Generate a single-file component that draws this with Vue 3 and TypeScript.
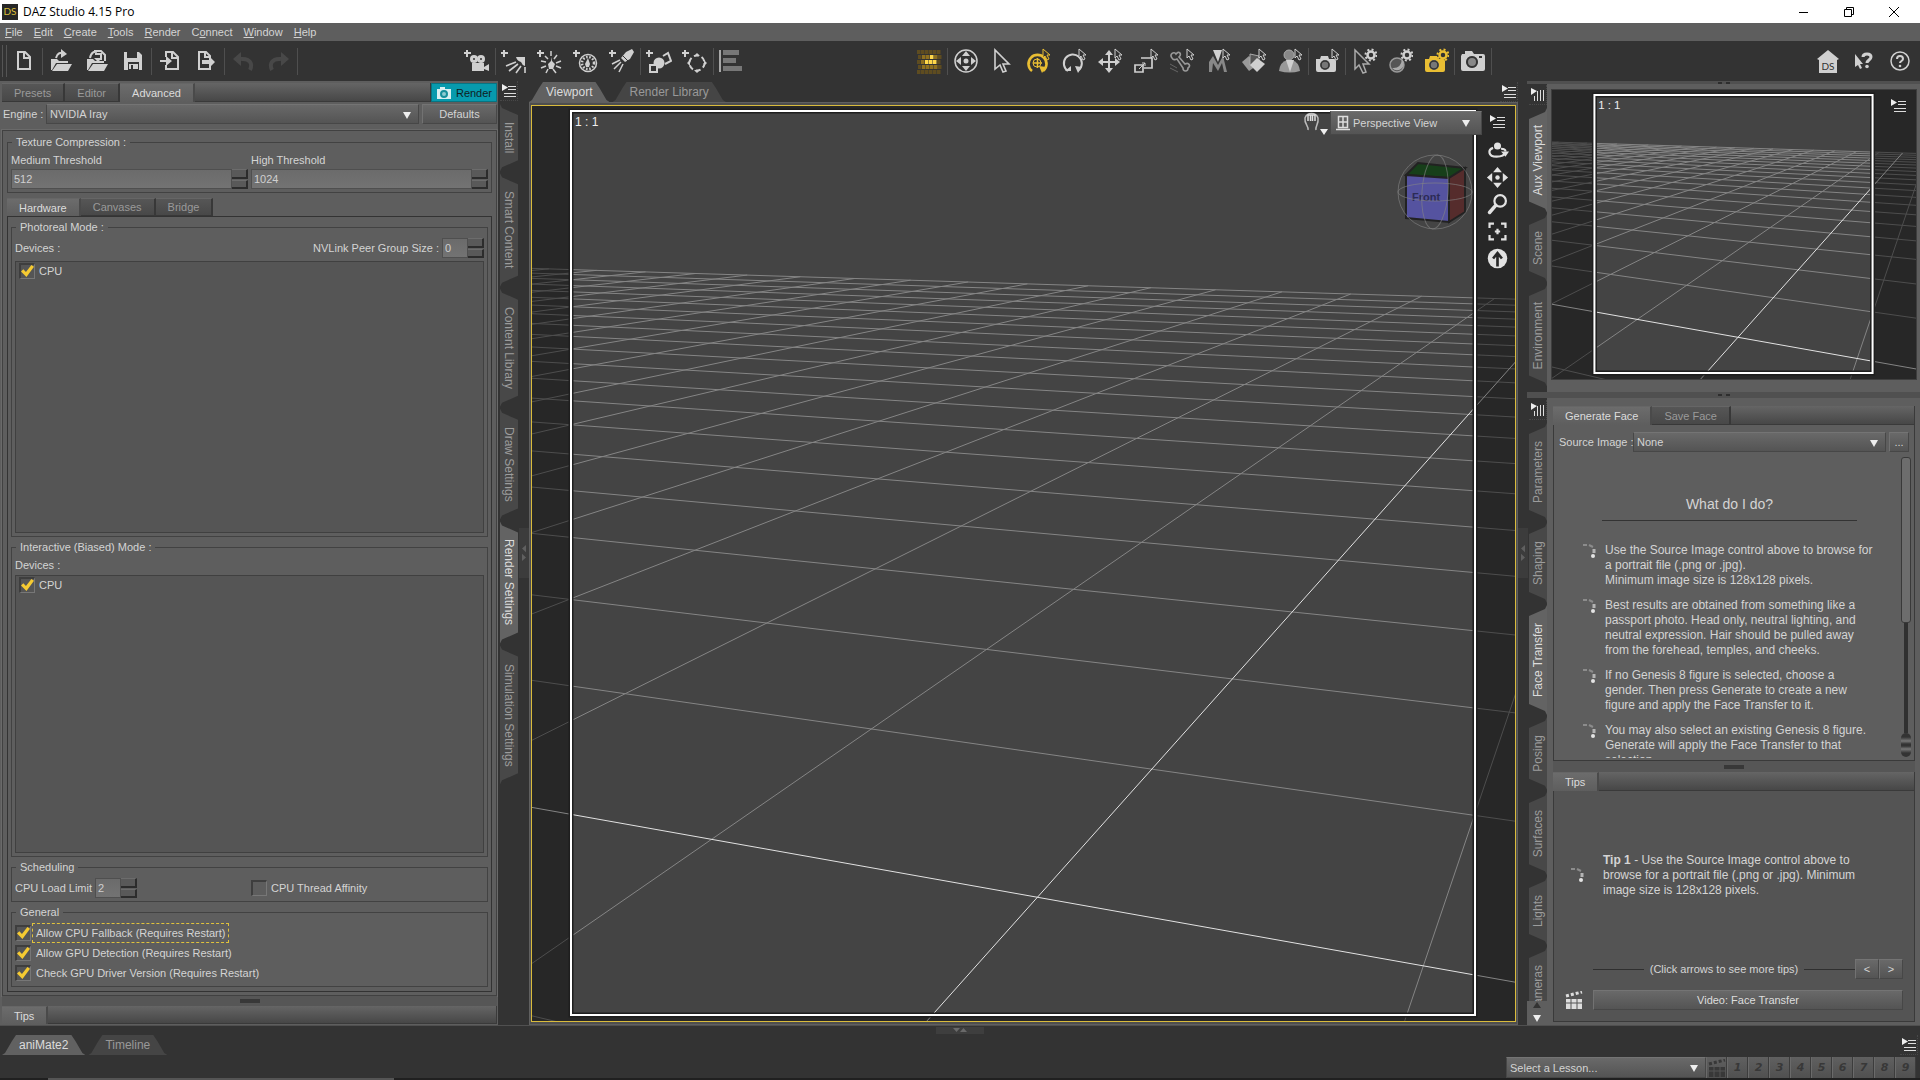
<script setup lang="ts">
import { ref } from 'vue'

interface Tool { label: string; art: string; tone?: string }
type Slot = Tool | null

const plus = '<path d="M0 5h7M3 2v7" stroke="currentColor" stroke-width="2" fill="none"/>'
const pointer = '<path d="M18 1v9l2-2 2 4 2-1-2-4h3z" fill="#333" stroke="currentColor" stroke-width="1"/>'
const cog = '<circle cx="20" cy="7" r="3.500" fill="none" stroke="currentColor" stroke-width="2.500"/><circle cx="20" cy="7" r="5.500" fill="none" stroke="currentColor" stroke-width="2" stroke-dasharray="2 2.300"/>'
const camBody = '<path d="M2 11h4l1-3h7l1 3h5q2 0 2 2v9q0 2-2 2H4q-2 0-2-2z" fill="currentColor"/><circle cx="11" cy="17" r="5" fill="#777"/><circle cx="11" cy="17" r="4" fill="none" stroke="#333" stroke-width="1.5"/>'
const clapper = '<path d="M1 8h16v10H1z" fill="currentColor"/><path d="M1 12h16M6 8v10M12 8v10" stroke="#555" stroke-width="1"/><path d="M1 5l16-4" stroke="currentColor" stroke-width="3" stroke-dasharray="3 2" fill="none"/>'

const fileTools: Slot[] = [
  { label: 'New', art: '<path d="M7 4h7l5 5v12H7z M13 4v6h6" fill="none" stroke="currentColor" stroke-width="2"/>' },
  null,
  { label: 'Open', art: '<path d="M3 11h6l2 2h9v2H8l-4 7H3z M9 16h15l-4 7H4z" fill="currentColor"/><path d="M8 10c1-5 5-6 8-5" fill="none" stroke="currentColor" stroke-width="2"/><path d="M13 1l6 5-6 4z" fill="currentColor"/>' },
  { label: 'Merge', art: '<path d="M3 11h6l2 2h9v2H8l-4 7H3z M9 16h15l-4 7H4z" fill="currentColor"/><path d="M6 10c1-6 5-7 7-6M10 3h7l4 4v6M11 6h6v6" fill="none" stroke="currentColor" stroke-width="2"/><path d="M10 10h8l-4 4z" fill="currentColor"/>' },
  { label: 'Save', art: '<path d="M4 4h15l3 3v15H4z" fill="currentColor"/><path d="M7 4h10v6H7z M8 14h11v8H8z" fill="#333"/><path d="M9 16h9v5H9z" fill="currentColor"/><path d="M11 17h2v4h-2z" fill="#333"/>' },
  null,
  { label: 'Import', art: '<path d="M9 9V4h7l5 5v12H9v-4 M15 4v6h6" fill="none" stroke="currentColor" stroke-width="2"/><path d="M3 12h6V8l6 5-6 5v-4H3z" fill="currentColor"/>' },
  { label: 'Export', art: '<path d="M17 10V8l-4-4H6v17h11v-3 M12 4v5h5" fill="none" stroke="currentColor" stroke-width="2"/><path d="M9 12h7V8l6 6-6 6v-4H9z" fill="currentColor"/>' },
  null,
  { label: 'Undo', tone: 'off', art: '<path d="M20 22c3-6 0-12-9-11" fill="none" stroke="currentColor" stroke-width="4"/><path d="M3 11l8-7v14z" fill="currentColor"/>' },
  { label: 'Redo', tone: 'off', art: '<path d="M6 22c-3-6 0-12 9-11" fill="none" stroke="currentColor" stroke-width="4"/><path d="M23 11l-8-7v14z" fill="currentColor"/>' },
  null,
]

const createTools: Slot[] = [
  { label: 'New Camera', art: plus + '<circle cx="10" cy="11" r="4" fill="currentColor"/><circle cx="17" cy="11" r="4" fill="currentColor"/><path d="M8 15h12v8H8z M20 19l5-3v7l-5-2z" fill="currentColor"/><circle cx="10" cy="11" r="1" fill="#333"/><circle cx="17" cy="11" r="1" fill="#333"/>' },
  null,
  { label: 'New Distant Light', art: plus + '<path d="M15 9h9v9q-3-1-4-4-4-1-5-5z" fill="currentColor"/><path d="M15 14L5 18M17 16L8 23M20 18l-5 7M24 19v6" stroke="currentColor" stroke-width="1.6" fill="none"/>' },
  { label: 'New Point Light', art: plus + '<path d="M14 9l1 4 3 3-2 5h-4l-1-5 3-3z" fill="currentColor"/><path d="M14 3v5M20 7l-3 4M24 13l-5 2M24 20l-5-2M19 25l-3-4M9 25l2-4M4 20l5-2M4 13l5 1M8 8l3 3" stroke="currentColor" stroke-width="1.5" fill="none"/>' },
  { label: 'New Linear Point Light', art: plus + '<circle cx="15" cy="15" r="8.5" fill="none" stroke="currentColor" stroke-width="1.5"/><circle cx="15" cy="15" r="6" fill="none" stroke="currentColor" stroke-width="2.5" stroke-dasharray="1.6 1.6"/><path d="M15 10l2 6-1 3h-3l-1-3z" fill="currentColor"/>' },
  { label: 'New Spotlight', art: plus + '<path d="M17 4l6-3 2 3-4 7-5 3-4-4z" fill="currentColor"/><path d="M14 8l5 5" stroke="#333"/><path d="M11 12L3 16M12 14l-7 7M14 16l-4 8" stroke="currentColor" stroke-width="1.5"/>' },
  null,
  { label: 'New Primitive', art: plus + '<circle cx="13" cy="15" r="5.5" fill="currentColor"/><path d="M17 8l5-3 3 8-6 3" fill="none" stroke="currentColor" stroke-width="2"/><path d="M4 17h7v7H4z" fill="#333" stroke="currentColor" stroke-width="2"/>' },
  { label: 'New Null', art: plus + '<circle cx="15" cy="15" r="7.5" fill="none" stroke="currentColor" stroke-width="2" stroke-dasharray="5 3"/><path d="M12 8l3-3 3 3zM12 22l3 3 3-3zM8 12l-3 3 3 3zM22 12l3 3-3 3z" fill="currentColor"/>' },
  null,
  { label: 'Align', art: '<path d="M1 2v22" stroke="currentColor" stroke-width="1.5"/><path d="M4 2h16v5H4z M4 10h13v5H4z M4 18h19v5H4z" fill="#777"/>' },
]

const bricks = Array.from({ length: 30 }, (_, i) => {
  const row = Math.floor(i / 6)
  const col = i % 6
  const hot = (row === 1 && col === 3) || (row === 2 && col > 1 && col < 5)
  return `<rect x="${1 + col * 4 + (row % 2)}" y="${2 + row * 5}" width="3.500" height="4" fill="${hot ? '#ffd84a' : col > 0 && col < 5 && row > 0 && row < 4 ? '#8f701f' : '#5e4c20'}"/>`
}).join('')

const sceneTools: Slot[] = [
  { label: 'Iray Preview', art: bricks },
  null,
  { label: 'Universal Manipulator', art: '<circle cx="13" cy="13" r="11" fill="none" stroke="currentColor" stroke-width="1.5"/><circle cx="13" cy="13" r="2.5" fill="currentColor"/><path d="M9 8l4-5 4 5zM9 18l4 5 4-5zM8 9l-5 4 5 4zM18 9l5 4-5 4z" fill="currentColor"/>' },
  { label: 'Node Selection', art: '<path d="M6 2v19l5-4 3 7 3-1-3-7h6z" fill="none" stroke="currentColor" stroke-width="1.6"/>' },
  { label: 'Active Pose', tone: 'gold', art: '<path d="M7 23a9 9 0 1 1 11 0" fill="none" stroke="currentColor" stroke-width="2.6"/><path d="M14 18l7 1-4 6z" fill="currentColor"/><path d="M8 15h9M12.500 10v10" stroke="currentColor" stroke-width="1.5"/><circle cx="12" cy="15" r="4" fill="none" stroke="currentColor"/>' + pointer },
  { label: 'Rotate', art: '<path d="M7 23a9 9 0 1 1 11-1" fill="none" stroke="currentColor" stroke-width="2"/><path d="M14 18l7 1-4 6z M4 23h6v-5z" fill="currentColor"/>' + pointer },
  { label: 'Translate', art: '<path d="M12 6v16M4 14h16" stroke="currentColor" stroke-width="2"/><path d="M8 7l4-5 4 5zM8 20l4 5 4-5zM6 10l-5 4 5 4zM18 10l5 4-5 4z" fill="currentColor"/>' + pointer },
  { label: 'Scale', art: '<path d="M2 17h8v7H2z M8 10h11v10h-8" fill="none" stroke="currentColor" stroke-width="1.7"/><path d="M6 21l6-6M12 18v-3h-3" stroke="currentColor" fill="none"/>' + pointer },
  { label: 'Joint Editor', art: '<path d="M3 10c-3-4 2-7 4-4 3-4 6 0 3 3l6 7c4-2 6 2 3 4 0 4-5 4-5 0l-6-9c-2 1-4 1-5-1z" fill="none" stroke="#999" stroke-width="1.6"/><path d="M1 16l7 4M1 20l8 4" stroke="#666"/>' + pointer },
  { label: 'Node Weight Brush', art: '<path d="M4 24V14l4-6 5 9 5-9 4 16h-3l-2-9-4 8-5-8-1 9z" fill="#888"/><path d="M8 2h9l-4 12z" fill="currentColor"/>' + pointer },
  { label: 'Surface Selection', art: '<path d="M1 14l7-6 7 10-7 5z" fill="#999"/><path d="M9 6l9 2v12l-9-3z" fill="#555" stroke="#aaa"/><path d="M16 10l8 6-8 8-7-7z" fill="currentColor"/>' + pointer },
  { label: 'Figure Setup', art: '<circle cx="12" cy="7" r="5" fill="#888" stroke="#aaa"/><path d="M2 23q1-9 8-11h5q7 2 8 11-10 3-21 0z" fill="#999"/><path d="M9 12l4 12 4-12z" fill="currentColor"/>' + pointer },
  null,
  { label: 'Spot Render', art: camBody + pointer },
  null,
  { label: 'Tool Settings', art: '<path d="M4 2v19l4-4 4 8 3-1-3-8h6z" fill="none" stroke="#aaa" stroke-width="1.5"/>' + cog },
  { label: 'Draw Settings', art: '<circle cx="10" cy="17" r="7" fill="#555" stroke="#999" stroke-width="1.500"/><path d="M5 20q9 1 10-9 4 6-1 10-5 3-9-1z" fill="#aaa"/>' + cog },
  { label: 'Render Settings', tone: 'gold', art: camBody + cog },
  null,
  { label: 'Render', art: '<path d="M2 6h3V3h7l2 3h9q2 0 2 2v13q0 2-2 2H3q-2 0-2-2V8z" fill="currentColor"/><circle cx="12" cy="14" r="6" fill="#888"/><circle cx="12" cy="14" r="5" fill="none" stroke="#333" stroke-width="2"/><path d="M19 8h3v2h-3z" fill="#333"/>' },
  null,
]

const helpTools: Slot[] = [
  { label: 'Home', art: '<path d="M13 2l11 9-2 1v13H4V12l-2-1z" fill="currentColor"/><text x="13" y="22" text-anchor="middle" font-family="Lato, sans-serif" font-size="10" fill="#333">DS</text>' },
  { label: "What's This?", art: '<path d="M4 6v13l3-2 2 4 2-1-2-4h3z" fill="currentColor"/><path d="M12 9c0-4 8-4 8 0 0 3-4 3-4 6" fill="none" stroke="currentColor" stroke-width="3"/><circle cx="16" cy="18.500" r="1.800" fill="currentColor"/>' },
  { label: 'Help', art: '<circle cx="13" cy="13" r="9" fill="none" stroke="currentColor" stroke-width="1.500"/><path d="M10 11c0-4 6-4 6 0 0 2-3 2-3 4" fill="none" stroke="currentColor" stroke-width="2"/><circle cx="13" cy="18" r="1.300" fill="currentColor"/>' },
]

const toolGroups = [
  { id: 'file', items: fileTools },
  { id: 'create', items: createTools },
  { id: 'scene', items: sceneTools },
  { id: 'help', items: helpTools },
]

const cameraTools: Tool[] = [
  { label: 'Orbit', art: '<path d="M8 10C2 12 2 20 12 20c6 0 9-2 10-5M17 11c3 0 5 1 5 3" fill="none" stroke="currentColor" stroke-width="2.500"/><circle cx="13" cy="8" r="4" fill="currentColor"/><path d="M17 14h9l-4 6z" fill="currentColor"/>' },
  { label: 'Pan', art: '<circle cx="13" cy="13" r="2.5" fill="currentColor"/><path d="M8 7l5-6 5 6zM8 19l5 6 5-6zM7 8l-6 5 6 5zM19 8l6 5-6 5z" fill="currentColor"/>' },
  { label: 'Zoom', art: '<circle cx="16" cy="9" r="6.5" fill="none" stroke="currentColor" stroke-width="2.500"/><path d="M11 14l-7 8" stroke="currentColor" stroke-width="4" stroke-linecap="round"/>' },
  { label: 'Frame', art: '<path d="M4 9V4h5M17 4h5v5M22 17v5h-5M9 22H4v-5M13 10v6M10 13h6" fill="none" stroke="currentColor" stroke-width="2.500"/>' },
  { label: 'Reset', art: '<circle cx="13" cy="13" r="11" fill="currentColor"/><path d="M13 22V8M8 13l5-6 5 6" fill="none" stroke="#282828" stroke-width="3"/>' },
]

const menus = [
  ['', 'F', 'ile'], ['', 'E', 'dit'], ['', 'C', 'reate'], ['', 'T', 'ools'],
  ['', 'R', 'ender'], ['C', 'o', 'nnect'], ['', 'W', 'indow'], ['', 'H', 'elp'],
]
const leftTabs = ['Install', 'Smart Content', 'Content Library', 'Draw Settings', 'Render Settings', 'Simulation Settings']
const auxTabs = ['Aux Viewport', 'Scene', 'Environment']
const rightTabs = ['Parameters', 'Shaping', 'Face Transfer', 'Posing', 'Surfaces', 'Lights', 'Cameras']

const general = ref([
  { label: 'Allow CPU Fallback (Requires Restart)', on: true, focus: true },
  { label: 'Allow GPU Detection (Requires Restart)', on: true, focus: false },
  { label: 'Check GPU Driver Version (Requires Restart)', on: true, focus: false },
])
const photorealCpu = ref(true)
const interactiveCpu = ref(true)
const affinity = ref(false)

const steps = [
  'Use the Source Image control above to browse for\na portrait file (.png or .jpg).\nMinimum image size is 128x128 pixels.',
  'Best results are obtained from something like a\npassport photo. Head only, neutral lighting, and\nneutral expression. Hair should be pulled away\nfrom the forehead, temples, and cheeks.',
  'If no Genesis 8 figure is selected, choose a\ngender. Then press Generate to create a new\nfigure and apply the Face Transfer to it.',
  'You may also select an existing Genesis 8 figure.\nGenerate will apply the Face Transfer to that\nselection.',
]

// Perspective projection of the ground plane into the 904-unit render frame.
function project(u: number, v: number): string {
  const w = 1 - 0.0844 * u + 0.2098 * v
  const x = (313.2 * u + 235.9 * v + 466.4) / w
  const y = (-3.62 * u + 10.2 * v + 785.5) / w
  return `${x.toFixed(1)} ${y.toFixed(1)}`
}
const along = (u: number) => `M${project(u, -2)}L${project(u, 20)}`
const across = (v: number) => `M${project(-20, v)}L${project(3, v)}`
let gridPath = ''
for (let u = -20; u <= 3; u++) if (u !== 0) gridPath += along(u)
for (let v = -2; v <= 20; v++) if (v !== 0) gridPath += across(v)
const axisPath = along(0) + across(0)
const maskPath = 'M-3000-3000H4000V4000H-3000zM0 0V904H904V0z'
</script>

<template>
  <div class="app">
    <header class="titlebar">
      <span class="logo">DS</span>
      <h1>DAZ Studio 4.15 Pro</h1>
      <button aria-label="Minimize"><svg width="12" height="12"><path d="M1 6.500h9" stroke="#000" /></svg></button>
      <button aria-label="Restore"><svg width="12" height="12"><path d="M1.500 3.500h7v7h-7z M3.500 3V1.500h7v7H9" fill="none" stroke="#000" /></svg></button>
      <button aria-label="Close"><svg width="12" height="12"><path d="M1 1l10 10M11 1L1 11" stroke="#000" /></svg></button>
    </header>

    <nav class="menubar">
      <button v-for="m in menus" :key="m.join('')">{{ m[0] }}<u>{{ m[1] }}</u>{{ m[2] }}</button>
    </nav>

    <div class="toolbar">
      <div v-for="g in toolGroups" :key="g.id" class="tools" :class="g.id">
        <template v-for="(t, i) in g.items" :key="i">
          <button v-if="t" :aria-label="t.label" :class="t.tone"><svg viewBox="0 0 26 26" v-html="t.art"></svg></button>
          <i v-else class="sep"></i>
        </template>
      </div>
    </div>

    <main class="work">
      <section class="dock left">
        <div class="panel settings">
          <div class="tabs">
            <button>Presets</button><button>Editor</button><button class="on">Advanced</button>
            <span class="fill"></span>
            <button class="render">
              <svg width="16" height="14" viewBox="0 0 16 14"><path d="M1 3h3V1h5v2h6v10H1z" fill="#d8f0f2" /><circle cx="8" cy="8" r="3" fill="#8fcbd1" stroke="#178f9b" stroke-width="2" /></svg>Render
            </button>
          </div>
          <div class="engine">
            <label for="engine">Engine :</label>
            <span class="combo"><select id="engine"><option>NVIDIA Iray</option></select></span>
            <button class="btn">Defaults</button>
          </div>
          <div class="outer">
            <fieldset>
              <legend>Texture Compression :</legend>
              <div class="pair">
                <div><label for="med">Medium Threshold</label><span class="spin"><input id="med" value="512" /><span><button aria-label="Increase"></button><button aria-label="Decrease"></button></span></span></div>
                <div><label for="high">High Threshold</label><span class="spin"><input id="high" value="1024" /><span><button aria-label="Increase"></button><button aria-label="Decrease"></button></span></span></div>
              </div>
            </fieldset>
            <div class="tabs sub">
              <button class="on">Hardware</button><button>Canvases</button><button>Bridge</button>
            </div>
            <div class="page">
              <fieldset class="grow">
                <legend>Photoreal Mode :</legend>
                <div class="row tall">
                  <span>Devices :</span>
                  <label class="push" for="nv">NVLink Peer Group Size :</label>
                  <span class="spin small"><input id="nv" value="0" /><span><button aria-label="Increase"></button><button aria-label="Decrease"></button></span></span>
                </div>
                <div class="list"><label class="check"><input v-model="photorealCpu" type="checkbox" />CPU</label></div>
              </fieldset>
              <fieldset class="grow">
                <legend>Interactive (Biased) Mode :</legend>
                <div class="row"><span>Devices :</span></div>
                <div class="list"><label class="check"><input v-model="interactiveCpu" type="checkbox" />CPU</label></div>
              </fieldset>
              <fieldset>
                <legend>Scheduling</legend>
                <div class="pair tall">
                  <div class="row">
                    <label for="load">CPU Load Limit</label>
                    <span class="spin small"><input id="load" value="2" /><span><button aria-label="Increase"></button><button aria-label="Decrease"></button></span></span>
                  </div>
                  <label class="check"><input v-model="affinity" type="checkbox" />CPU Thread Affinity</label>
                </div>
              </fieldset>
              <fieldset>
                <legend>General</legend>
                <div>
                  <label v-for="g in general" :key="g.label" class="check opt"><input v-model="g.on" type="checkbox" /><span :class="{ focus: g.focus }">{{ g.label }}</span></label>
                </div>
              </fieldset>
            </div>
          </div>
          <div class="grip"><i></i></div>
          <div class="tabs tipbar"><button class="on">Tips</button><span class="fill"></span></div>
        </div>
        <div class="strip">
          <button class="menu" aria-label="Pane options"><svg width="14" height="14"><path d="M0 0l6 3.500L0 7z" fill="#eee" /><path d="M6 2.500h8M6 5.500h8M2 9.500h12M2 12.500h12" stroke="#ddd" /></svg></button>
          <button v-for="t in leftTabs" :key="t" class="side" :class="{ on: t === 'Render Settings' }">{{ t }}</button>
        </div>
      </section>

      <div class="gutter"><i></i></div>

      <section class="center">
        <div class="vtabs">
          <button class="trap on">Viewport</button><button class="trap">Render Library</button>
          <button class="menu push" aria-label="Pane options"><svg width="14" height="14"><path d="M0 0l6 3.500L0 7z" fill="#eee" /><path d="M6 2.500h8M6 5.500h8M2 9.500h12M2 12.500h12" stroke="#ddd" /></svg></button>
        </div>
        <div class="frame">
          <div class="view">
            <svg class="scene" viewBox="0 0 904 904">
              <path :d="gridPath" class="grid" />
              <path :d="axisPath" class="axis" />
              <path :d="maskPath" class="mask" />
              <rect x="1" y="1" width="902" height="902" class="shadow" />
              <rect x="1" y="1" width="902" height="902" class="border" />
              <text x="5" y="16" class="ratio">1 : 1</text>
            </svg>
            <svg class="cube" width="78" height="80" viewBox="0 0 78 80">
              <path d="M10 23l12-12 47 5-16 10z" fill="#173f1a" stroke="#222" stroke-width="2" />
              <path d="M53 26l16-10v44L53 70z" fill="#552c2c" stroke="#222" stroke-width="2" />
              <path d="M10 23l43 3v44l-43-4z" fill="#5553a0" stroke="#222" stroke-width="2" />
              <text x="30" y="49" text-anchor="middle" font-family="Liberation Sans, sans-serif" font-size="11" font-weight="bold" fill="#2c2b55">Front</text>
              <g fill="none" stroke="#858585" stroke-opacity="0.600"><circle cx="39" cy="40" r="37" /><ellipse cx="39" cy="40" rx="37" ry="9" /><ellipse cx="39" cy="40" rx="13" ry="37" transform="rotate(4 39 40)" /></g>
            </svg>
            <div class="viewbar">
              <svg class="hand" width="26" height="26"><path d="M5 19c1-4-4-6-3-12 2-6 11-6 13 0 1 6-3 8-2 12" fill="none" stroke="#bbb" stroke-width="1.500" /><path d="M5 10V4h7v6M7.500 4v6M9.500 4v6" fill="none" stroke="#ddd" stroke-width="1.500" /><path d="M17 18h8l-4 6z" fill="#eee" /></svg>
              <span class="combo cam">
                <svg width="14" height="16"><path d="M2.500 1.500h9v11h-9z M7 1v12M2 7h10M0 14.500h14" fill="none" stroke="#ddd" stroke-width="1.500" /></svg>
                <select aria-label="Camera"><option>Perspective View</option></select>
              </span>
              <button class="vmenu" aria-label="Viewport options"><svg width="16" height="14"><path d="M0 0l6 3.500L0 7z" fill="#eee" /><path d="M7 2.500h8M7 5.500h8M3 9.500h12M3 12.500h12" stroke="#ddd" /></svg></button>
            </div>
            <div class="camtools">
              <button v-for="c in cameraTools" :key="c.label" :aria-label="c.label"><svg viewBox="0 0 26 26" v-html="c.art"></svg></button>
            </div>
          </div>
        </div>
      </section>

      <div class="gutter"><i></i></div>

      <section class="dock right">
        <div class="ridge"><i></i></div>
        <div class="block aux">
          <div class="strip">
            <button class="menu" aria-label="Pane options"><svg width="14" height="14"><path d="M0 0l6 3L0 7z" fill="#eee" /><path d="M6.500 3v10M9.500 2v11M12.500 2v11M3.500 8v5" stroke="#ddd" /></svg></button>
            <button v-for="t in auxTabs" :key="t" class="side" :class="{ on: t === 'Aux Viewport' }">{{ t }}</button>
          </div>
          <div class="panel">
            <div class="view">
              <svg class="scene" viewBox="0 0 904 904">
                <path :d="gridPath" class="grid" />
                <path :d="axisPath" class="axis" />
                <path :d="maskPath" class="mask" />
                <rect x="3" y="3" width="898" height="898" class="shadow" />
                <rect x="3" y="3" width="898" height="898" class="border" />
                <text x="15" y="50" class="ratio aux-ratio">1 : 1</text>
              </svg>
              <button class="vmenu" aria-label="Viewport options"><svg width="16" height="14"><path d="M0 0l6 3.500L0 7z" fill="#eee" /><path d="M7 2.500h8M7 5.500h8M3 9.500h12M3 12.500h12" stroke="#ddd" /></svg></button>
            </div>
          </div>
        </div>
        <div class="ridge mid"><i></i></div>
        <div class="block lower">
          <div class="strip">
            <button class="menu" aria-label="Pane options"><svg width="14" height="14"><path d="M0 0l6 3L0 7z" fill="#eee" /><path d="M6.500 3v10M9.500 2v11M12.500 2v11M3.500 8v5" stroke="#ddd" /></svg></button>
            <button v-for="t in rightTabs" :key="t" class="side" :class="{ on: t === 'Face Transfer' }">{{ t }}</button>
            <div class="scroller"><svg width="10" height="22"><path d="M1 7l4-6 4 6z" fill="#333" /><path d="M1 14h8l-4 7z" fill="#eee" /></svg></div>
          </div>
          <div class="panel">
            <div class="face">
              <div class="tabs"><button class="on">Generate Face</button><button>Save Face</button><span class="fill"></span></div>
              <div class="body">
                <div class="source">
                  <label for="src">Source Image :</label>
                  <span class="combo"><select id="src"><option>None</option></select></span>
                  <button class="btn">...</button>
                </div>
                <div class="scroll">
                  <div class="guide">
                    <h2>What do I do?</h2>
                    <ul>
                      <li v-for="s in steps" :key="s">
                        <svg width="14" height="16"><path d="M1 2h4M7 2l4 2" stroke="#8c8c8c" stroke-width="2" /><path d="M12 6v4" stroke="#b4b4b4" stroke-width="3" /><circle cx="11" cy="13" r="2" fill="#e4e4e4" /></svg>
                        <p>{{ s }}</p>
                      </li>
                    </ul>
                  </div>
                  <div class="bar"><i></i><b></b></div>
                </div>
              </div>
            </div>
            <div class="grip"><i></i></div>
            <div class="tips">
              <div class="tabs"><button class="on">Tips</button><span class="fill"></span></div>
              <div class="body">
                <div class="tip">
                  <svg width="14" height="16"><path d="M1 2h4M7 2l4 2" stroke="#8c8c8c" stroke-width="2" /><path d="M12 6v4" stroke="#b4b4b4" stroke-width="3" /><circle cx="11" cy="13" r="2" fill="#e4e4e4" /></svg>
                  <p><strong>Tip 1</strong> - Use the Source Image control above to<br />browse for a portrait file (.png or .jpg). Minimum<br />image size is 128x128 pixels.</p>
                </div>
                <div class="pager"><hr /><span>(Click arrows to see more tips)</span><hr /><button class="btn">&lt;</button><button class="btn">&gt;</button></div>
                <div class="video"><svg width="18" height="18" v-html="clapper"></svg><button class="btn">Video: Face Transfer</button></div>
              </div>
            </div>
          </div>
        </div>
      </section>
    </main>

    <footer class="bottom">
      <span class="nub"></span>
      <div class="vtabs">
        <button class="trap on">aniMate2</button><button class="trap">Timeline</button>
        <button class="menu push" aria-label="Pane options"><svg width="14" height="14"><path d="M0 0l6 3.500L0 7z" fill="#eee" /><path d="M6 2.500h8M6 5.500h8M2 9.500h12M2 12.500h12" stroke="#ddd" /></svg></button>
      </div>
      <div class="lessons">
        <span class="combo"><select aria-label="Lesson"><option>Select a Lesson...</option></select></span>
        <button class="num" aria-label="Play lesson"><svg width="18" height="18" v-html="clapper"></svg></button>
        <button v-for="n in 9" :key="n" class="num">{{ n }}</button>
      </div>
      <div class="edge"><i></i></div>
    </footer>
  </div>
</template>

<style>
body { margin: 0; background: #333; overflow: hidden; }
</style>

<style scoped>
.app { height: 100vh; display: flex; flex-direction: column; overflow: hidden; background: #333; color: #d4d4d4; font: 11px/14px "Liberation Sans", Arial, sans-serif; }
.app * { box-sizing: border-box; }
button, input, select { font: inherit; color: inherit; border: 0; padding: 0; margin: 0; background: none; border-radius: 0; outline: 0; }
button, label { white-space: nowrap; }
svg { display: block; flex: none; }
p, h1, h2, ul { margin: 0; padding: 0; font-weight: normal; }
.push { margin-left: auto; }

.titlebar { flex: none; height: 23px; display: flex; align-items: center; background: #fff; color: #000; padding: 0 4px 0 2px; }
.logo { width: 16px; height: 16px; background: #262626; color: #d8bd3a; font: 10px/15px Lato, sans-serif; text-align: center; }
.titlebar h1 { font: 12px/16px "Open Sans", "Noto Sans", sans-serif; margin: 0 auto 0 5px; }
.titlebar button { width: 45px; height: 23px; display: flex; align-items: center; justify-content: center; }
.menubar { flex: none; height: 18px; background: #5e5e5e; display: flex; gap: 11px; padding: 0 5px; }
.toolbar { flex: none; height: 40px; padding: 0 2px 0 6px; display: flex; align-items: center; position: relative; }
.toolbar::before { content: ""; width: 3px; height: 32px; border: solid #555; border-width: 0 1px; position: absolute; left: 2px; }
.tools { display: flex; align-items: center; color: #d0d0d0; }
.tools button { width: 36px; height: 36px; display: flex; align-items: center; justify-content: center; }
.tools button svg { width: 26px; height: 26px; }
.tools .off { color: #484848; }
.tools .gold { color: #e9be33; }
.sep { width: 1px; height: 27px; background: #4f4f4f; }
.file { flex: 1 1 453px; }
.create { flex: 1 1 452px; }
.scene { flex: 1 1 899px; }
.help { flex: none; }

.work { flex: 1; min-height: 0; display: flex; }
.dock { display: flex; }
.left { flex: 0 0 519px; min-height: 0; }
.right { flex: 0 0 393px; flex-direction: column; min-height: 0; }
.panel { flex: 1; min-width: 0; background: #5e5e5e; display: flex; flex-direction: column; }
.settings { padding: 2px 1px 1px 2px; }
.strip { flex: none; width: 21px; display: flex; flex-direction: column; align-items: flex-start; padding-left: 2px; overflow: hidden; }
.menu { flex: none; width: 18px; height: 20px; border: 1px dotted #484848; border-width: 0 1px 1px 0; display: flex; align-items: center; justify-content: center; margin-bottom: 2px; }
.side { flex: none; width: 18px; writing-mode: vertical-rl; font-size: 12px; line-height: 18px; padding: 19px 0; color: #9c9c9c; background: #484848; clip-path: polygon(0 1px, 2px 5px, 100% 12px, 100% calc(100% - 12px), 2px calc(100% - 5px), 0 calc(100% - 1px)); }
.side.on { background: #636363; color: #dcdcdc; }
.right .strip { width: 20px; position: relative; }
.right .side { transform: rotate(180deg); }
.aux .side { padding: 18px 0; }

.tabs { flex: none; display: flex; height: 19px; }
.tabs > button { padding: 0 12px; color: #9a9a9a; background: linear-gradient(#565656, #484848); border-right: 2px solid #383838; border-bottom: 1px solid #383838; border-top: 1px solid #666; }
.tabs > button.on { color: #dcdcdc; background: linear-gradient(#6c6c6c, #5e5e5e); border-bottom: 0; border-right-color: #4a4a4a; }
.tabs .fill { flex: 1; background: linear-gradient(#656565, #474747); border-bottom: 1px solid #3a3a3a; border-right: 1px solid #3a3a3a; }
.tabs > button.render { width: 66px; padding: 0; display: flex; align-items: center; justify-content: space-evenly; color: #101c1e; background: #079aad; border: 1px solid #087482; }
.btn { height: 20px; border: 1px solid #474747; border-top-color: #747474; border-left-color: #727272; background: linear-gradient(#696969, #545454); text-align: center; }
.combo { flex: 1; height: 20px; display: flex; align-items: center; position: relative; border: 1px solid #474747; border-top-color: #747474; background: linear-gradient(#696969, #545454); }
.combo select { flex: 1; height: 18px; appearance: none; padding-left: 3px; }
.combo::after { content: ""; width: 8px; height: 7px; background: #eee; clip-path: polygon(0 0, 100% 0, 50% 100%); position: absolute; right: 7px; top: 7px; pointer-events: none; }
.engine { flex: none; display: flex; align-items: center; gap: 3px; margin: 2px 0 6px; }
.engine label { width: 41px; padding-left: 1px; }
.engine .btn { width: 75px; }
.outer { flex: 1; min-height: 0; display: flex; flex-direction: column; border: 1px solid #414141; outline: 1px solid #6a6a6a; padding: 4px 4px 3px; }
fieldset { border: 1px solid #424242; margin: 0; padding: 4px 3px 3px; min-width: 0; display: flex; flex-direction: column; gap: 3px; }
legend { margin-left: 1px; padding: 0 4px; line-height: 14px; }
.pair { display: grid; grid-template-columns: 1fr 1fr; gap: 3px; }
.pair > div > label { display: block; margin-bottom: 2px; }
.pair.tall .row label { margin: 0 3px 0 0; }
.spin { display: flex; height: 20px; }
.spin input { flex: 1; min-width: 0; background: linear-gradient(#6b6b6b, #737373); border: 1px solid #4f4f4f; padding-left: 2px; color: #cfcfcf; }
.spin > span { width: 16px; display: flex; flex-direction: column; gap: 1px; }
.spin button { flex: 1; background: #595959; border: solid #2c2c2c; border-width: 0 2px 2px 0; border-top: 1px solid #6c6c6c; }
.spin.small { width: 42px; }
.sub { margin-top: 5px; height: 18px; }
.page { flex: 1; min-height: 0; display: flex; flex-direction: column; gap: 3px; border: 1px solid #333; padding: 3px 3px 4px; }
.grow { flex: 1 1 0; min-height: 0; }
.row { display: flex; align-items: center; }
.row .push { margin-right: 3px; }
.tall { height: 20px; }
.list { flex: 1; background: #555; border: 1px solid #404040; padding: 1px 3px; }
.check { display: flex; align-items: center; gap: 4px; }
.check input { appearance: none; width: 16px; height: 16px; background: #5d5d5d; border: solid #3e3e3e; border-width: 2px 1px 1px 2px; border-right-color: #777; border-bottom-color: #777; flex: none; }
.check input:checked { background: #555; }
.check input:checked::before { content: ""; display: block; width: 13px; height: 12px; background: #f5ca32; clip-path: polygon(0 55%, 18% 36%, 38% 58%, 80% 0, 100% 14%, 42% 100%); }
.opt { height: 20px; gap: 1px; }
.opt span { padding: 2px 2px 2px 3px; border: 1px solid transparent; line-height: 14px; }
.opt .focus { border: 1px dashed #e0c23c; }
.grip { flex: none; height: 10px; display: flex; align-items: center; justify-content: center; background: #565656; }
.grip i { width: 20px; height: 4px; border: solid #383838; border-width: 2px 0; background: #555; }
.tipbar { height: 18px; }

.gutter { flex: 0 0 10px; display: flex; align-items: center; }
.gutter + .right { margin-left: -1px; }
.gutter i { flex: 1; height: 50px; background: #3c3c3c; display: block; }
.gutter i::before { content: ""; display: block; width: 4px; height: 16px; margin: 17px 3px; background: #606060; clip-path: polygon(100% 0, 100% 45%, 0 22%, 0 55%, 100% 78%, 0 100%, 0 55%, 0 22%); }
.center { flex: 1; min-width: 0; display: flex; flex-direction: column; }
.vtabs { display: flex; flex: none; height: 21px; padding-top: 1px; }
.trap { font-size: 12px; line-height: 18px; padding: 0 17px; color: #999; background: #454545; clip-path: polygon(0 100%, 3px 90%, 10px 6px, 14px 0, calc(100% - 14px) 0, calc(100% - 10px) 6px, calc(100% - 3px) 90%, 100% 100%); margin-right: 3px; }
.trap.on { color: #dcdcdc; background: #616161; }
.frame { flex: 1; min-height: 0; display: flex; background: #4e4e4e; border: 1px solid #606060; padding: 2px 1px; }
.view { flex: 1; min-width: 0; position: relative; background: #444; overflow: hidden; padding: 4px 5px 5px 4px; }
.frame .view { border: 1px solid #d9bb3c; }
.view .scene { display: block; width: 100%; height: 100%; overflow: visible; }
.grid, .axis, .border, .shadow { fill: none; vector-effect: non-scaling-stroke; }
.grid { stroke: #858585; stroke-width: 1px; }
.axis { stroke: #e2e2e2; stroke-width: 1px; }
.mask { fill: #000; fill-opacity: 0.42; fill-rule: evenodd; }
.shadow { stroke: #1e1e1e; stroke-width: 5px; }
.border { stroke: #fff; stroke-width: 2px; }
.ratio { fill: #eee; font: 12px "Liberation Sans", sans-serif; }
.aux-ratio { font-size: 37px; }
.viewbar { position: absolute; top: 5px; right: 9px; display: flex; align-items: flex-start; }
.cam { flex: none; width: 152px; height: 24px; padding-left: 5px; margin-left: 1px; }
.cam::after { right: 11px; top: 8px; }
.vmenu { width: 16px; height: 14px; margin: 4px 0 0 8px; }
.aux .vmenu { position: absolute; top: 5px; right: 9px; }
.camtools { position: absolute; top: 31px; right: 5px; display: flex; flex-direction: column; color: #e2e2e2; }
.camtools button { height: 27px; width: 26px; display: flex; align-items: center; justify-content: center; }
.camtools svg { width: 23px; height: 23px; }
.cube { position: absolute; top: 46px; right: 41px; }

.ridge { flex: none; height: 3px; background: #505050; display: flex; justify-content: center; align-items: center; }
.ridge i { width: 12px; height: 2px; border: solid #2e2e2e; border-width: 0 4px; }
.ridge.mid { height: 6px; }
.block { display: flex; min-height: 0; }
.aux { flex: 1 1 308px; }
.aux .strip { padding-top: 1px; }
.aux .panel { padding: 5px 3px 12px 4px; }
.aux .view { border: 1px solid #3e3e3e; }
.lower { flex: 1 1 627px; }
.lower .strip { padding-top: 2px; }
.lower .panel { padding: 8px 5px 3px 6px; }
.scroller { position: absolute; left: 0; bottom: 0; width: 20px; height: 24px; background: #5e5e5e; display: flex; justify-content: center; }
.face { flex: 355 1 0; min-height: 0; display: flex; flex-direction: column; }
.tips { flex: 250 1 0; min-height: 0; display: flex; flex-direction: column; }
.body { flex: 1; min-height: 0; border: 1px solid #3a3a3a; border-top: 0; display: flex; flex-direction: column; }
.source { flex: none; display: flex; gap: 3px; align-items: center; padding: 7px 5px 5px; }
.source label { width: 71px; }
.source .btn { width: 20px; }
.scroll { flex: 1; min-height: 0; display: flex; }
.guide { flex: 1; overflow: hidden; margin-bottom: 2px; }
.guide h2 { font-size: 14px; line-height: 16px; text-align: center; margin: 39px 44px 22px 48px; padding-bottom: 8px; border-bottom: 1px solid #333; }
.guide li { display: flex; gap: 9px; margin: 0 0 10px 28px; font-size: 12px; line-height: 15px; white-space: pre; }
.bar { width: 10px; margin: 0 3px 3px 0; display: flex; flex-direction: column; align-items: center; }
.bar::before { content: ""; flex: 165; width: 8px; border: 1px solid #393939; background: #6d6d6d; border-radius: 3px; }
.bar i { flex: 111; width: 4px; background: #303030; }
.bar b { height: 24px; width: 10px; border-radius: 5px; background: linear-gradient(#333 4px, #777 8px, #333 11px, #333 13px, #777 16px, #333 20px); }
.lower .grip { height: 11px; }
.tips .body { background: #545454; padding: 0 11px; }
.tip { flex: 1; display: flex; align-items: center; gap: 19px; padding-left: 5px; font-size: 12px; line-height: 15px; white-space: nowrap; }
.pager { display: flex; align-items: center; padding-left: 28px; }
.pager hr { flex: 1; border: 0; height: 1px; background: #2f2f2f; margin: 0; }
.pager span { padding: 0 6px; }
.pager .btn { width: 24px; }
.video { display: flex; align-items: center; gap: 10px; margin: 11px 0; color: #ddd; }
.video .btn { flex: 1; }

.bottom { flex: 0 0 55px; position: relative; display: flex; flex-direction: column; border-top: 1px solid #505050; }
.bottom .vtabs { height: 30px; padding: 9px 2px 0; }
.bottom .trap { height: 20px; font-size: 12px; }
.nub { position: absolute; left: 50%; top: 1px; width: 48px; height: 7px; margin-left: -24px; background: #3e3e3e; }
.nub::before { content: ""; display: block; width: 14px; height: 4px; margin: 1px 17px; background: #6a6a6a; clip-path: polygon(0 0, 50% 0, 25% 100%, 50% 100%, 75% 0, 100% 100%, 50% 100%, 25% 100%); }
.lessons { display: flex; justify-content: flex-end; margin-top: 1px; padding-right: 4px; height: 21px; }
.lessons .combo { flex: 0 0 200px; height: 21px; }
.num { width: 21px; height: 21px; display: flex; align-items: center; justify-content: center; background: linear-gradient(#606060, #505050); border-right: 1px solid #3c3c3c; border-left: 1px solid #6a6a6a; color: #383838; font: italic bold 11px/20px "DejaVu Sans", sans-serif; }
.edge { height: 2px; background: #202020; display: flex; }
.edge i { width: 18%; margin-left: 48px; background: #555; }
</style>
